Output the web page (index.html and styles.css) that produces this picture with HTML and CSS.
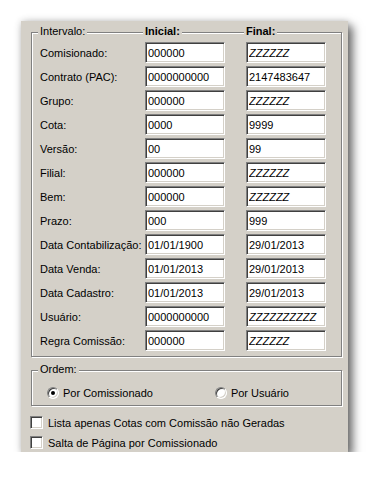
FILE: index.html
```html
<!DOCTYPE html>
<html lang="pt-BR">
<head>
  <meta charset="UTF-8" />
  <title>Filtro de Comissões</title>
  <link rel="stylesheet" href="styles.css">
</head>
<body>
  <div class="panel">
    <div class="group">
      <div class="group-head grid">
        <span class="legend">Intervalo:</span>
        <span class="legend bold">Inicial:</span>
        <span class="legend bold">Final:</span>
      </div>
      <div class="rows">
        <div class="grid"><span>Comisionado:</span><input class="field" value="000000" readonly><input class="field mask" value="ZZZZZZ" readonly></div>
        <div class="grid"><span>Contrato (PAC):</span><input class="field" value="0000000000" readonly><input class="field" value="2147483647" readonly></div>
        <div class="grid"><span>Grupo:</span><input class="field" value="000000" readonly><input class="field mask" value="ZZZZZZ" readonly></div>
        <div class="grid"><span>Cota:</span><input class="field" value="0000" readonly><input class="field" value="9999" readonly></div>
        <div class="grid"><span>Versão:</span><input class="field" value="00" readonly><input class="field" value="99" readonly></div>
        <div class="grid"><span>Filial:</span><input class="field" value="000000" readonly><input class="field mask" value="ZZZZZZ" readonly></div>
        <div class="grid"><span>Bem:</span><input class="field" value="000000" readonly><input class="field mask" value="ZZZZZZ" readonly></div>
        <div class="grid"><span>Prazo:</span><input class="field" value="000" readonly><input class="field" value="999" readonly></div>
        <div class="grid"><span>Data Contabilização:</span><input class="field" value="01/01/1900" readonly><input class="field" value="29/01/2013" readonly></div>
        <div class="grid"><span>Data Venda:</span><input class="field" value="01/01/2013" readonly><input class="field" value="29/01/2013" readonly></div>
        <div class="grid"><span>Data Cadastro:</span><input class="field" value="01/01/2013" readonly><input class="field" value="29/01/2013" readonly></div>
        <div class="grid"><span>Usuário:</span><input class="field" value="0000000000" readonly><input class="field mask" value="ZZZZZZZZZZ" readonly></div>
        <div class="grid"><span>Regra Comissão:</span><input class="field" value="000000" readonly><input class="field mask" value="ZZZZZZ" readonly></div>
      </div>
    </div>

    <div class="group order">
      <div class="group-head">
        <span class="legend">Ordem:</span>
      </div>
      <div class="radios">
        <label class="radio first"><span class="dot checked"></span>Por Comissionado</label>
        <label class="radio second"><span class="dot"></span>Por Usuário</label>
      </div>
    </div>

    <div class="checks">
      <label class="check"><span class="box"></span>Lista apenas Cotas com Comissão não Geradas</label>
      <label class="check"><span class="box"></span>Salta de Página por Comissionado</label>
    </div>
  </div>
</body>
</html>
```

FILE: styles.css
```css
* {
  margin: 0;
  padding: 0;
  box-sizing: border-box;
}

body {
  background-color: #ffffff;
  font-family: 'Liberation Sans', Arial, sans-serif;
  font-size: 11px;
  color: #000;
  padding: 21px 0 0 21px;
}

.panel {
  width: 327px;
  height: 431px;
  background-color: #d4d0c8;
  padding: 11px 0 3px 0;
  box-shadow: 5px 5px 9px rgba(0, 0, 0, 0.55), 0 0 7px rgba(0, 0, 0, 0.18);
}

.group {
  margin-left: 10px;
  width: 311px;
  border: 1px solid #808080;
  box-shadow: 1px 1px 0 #fff, inset 1px 1px 0 #fff;
  padding: 0 0 5px 8px;
}

.group-head {
  margin-top: -8px;
  height: 13px;
  line-height: 13px;
}

.legend {
  background-color: #d4d0c8;
  padding: 0 2px;
  margin-left: -2px;
  justify-self: start;
}

.bold {
  font-weight: bold;
}

.grid {
  display: grid;
  grid-template-columns: 105px 101px 80px;
  align-items: center;
}

.rows {
  margin-top: 4px;
  display: flex;
  flex-direction: column;
  gap: 3px;
}

.grid span {
  white-space: nowrap;
}

.field {
  width: 80px;
  height: 21px;
  font-family: 'Liberation Sans', Arial, sans-serif;
  font-size: 11px;
  color: #000;
  background: #fff;
  border: 1px solid;
  border-color: #808080 #fff #fff #808080;
  box-shadow: inset 1px 1px 0 #404040, inset -1px -1px 0 #d4d0c8;
  padding: 0 0 0 2px;
  outline: none;
}

.mask {
  font-style: italic;
}

.order {
  margin-top: 13px;
  padding-bottom: 6px;
}

.radios {
  margin-top: 10px;
  display: flex;
  height: 13px;
  align-items: center;
}

.radio {
  display: flex;
  align-items: center;
  gap: 4px;
}

.radio.first {
  margin-left: 7px;
}

.radio.second {
  margin-left: 62px;
}

.dot {
  width: 12px;
  height: 12px;
  border-radius: 50%;
  background: #fff;
  border: 1px solid;
  border-color: #808080 #fff #fff #808080;
  box-shadow: inset 1px 1px 0 #404040, inset -1px -1px 0 #d4d0c8;
  display: flex;
  align-items: center;
  justify-content: center;
}

.dot.checked::after {
  content: "";
  width: 4px;
  height: 4px;
  border-radius: 50%;
  background: #000;
}

.checks {
  margin: 10px 0 0 9px;
  display: flex;
  flex-direction: column;
  gap: 7px;
}

.check {
  display: flex;
  align-items: center;
  gap: 5px;
  height: 13px;
}

.box {
  width: 13px;
  height: 13px;
  background: #fff;
  border: 1px solid;
  border-color: #808080 #fff #fff #808080;
  box-shadow: inset 1px 1px 0 #404040, inset -1px -1px 0 #d4d0c8;
}
```
